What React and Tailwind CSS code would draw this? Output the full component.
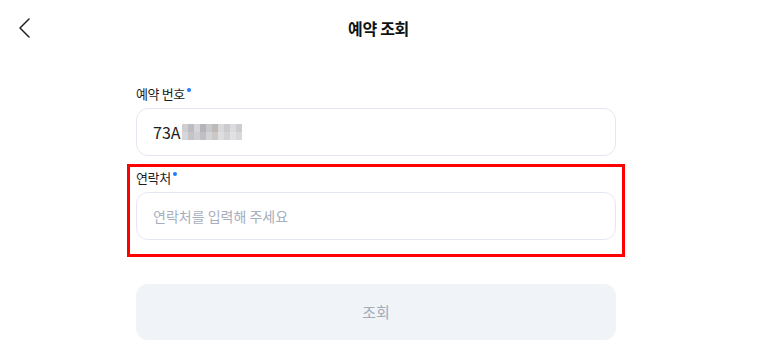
import React from "react";

const mosaic = [
  ["#cfcfd3", "#bcbcc1", "#d6d6d9", "#b4b4ba", "#c8c8cc", "#bdb9b8", "#d9d9dc", "#cbcbcf", "#dcdcdf", "#cdcdd1"],
  ["#d7d7da", "#c4c4c8", "#cfcfd2", "#bfbfc4", "#d4d4d7", "#cbc8c6", "#dedee1", "#d3d3d6", "#e1e1e3", "#d8d8db"],
];

const Label = ({ children }) => (
  <div className="flex items-start h-[20px] text-[13px] leading-[20px] text-[#1b1d22] tracking-[-0.03em]">
    <span>{children}</span>
    <span className="ml-[2px] mt-[4px] w-[4px] h-[4px] rounded-full bg-[#1f7bff]" />
  </div>
);

export default function App() {
  return (
    <div className="w-[757px] h-[353px] bg-white overflow-hidden" style={{ fontFamily: '"Noto Sans CJK KR", "Noto Sans", sans-serif' }}>
      <header className="relative h-[56px] flex items-center justify-center">
        <button className="absolute left-[18px] top-[18px] w-[12px] h-[20px] flex items-center justify-center">
          <svg width="12" height="20" viewBox="0 0 12 20" fill="none">
            <path d="M11 1 L2 10 L11 19" stroke="#222" strokeWidth="1.5" strokeLinecap="round" strokeLinejoin="round" />
          </svg>
        </button>
        <h1 className="text-[16px] font-bold text-[#111] tracking-[-0.02em]">예약 조회</h1>
      </header>

      <div className="ml-[136px] w-[480px] mt-[28px]">
        <Label>예약 번호</Label>
        <div className="mt-[4px] h-[48px] rounded-[12px] border border-[#e3e8f0] flex items-center px-[16px]">
          <span className="text-[16px] text-[#1b1d22] mr-[1px]">73A</span>
          <div className="flex flex-col">
            {mosaic.map((row, i) => (
              <div key={i} className="flex">
                {row.map((c, j) => (
                  <div key={j} className="w-[6px] h-[8px]" style={{ backgroundColor: c }} />
                ))}
              </div>
            ))}
          </div>
        </div>

        <div className="mt-[8px] -mx-[9px] border-[3px] border-[#ff0000] px-[6px] pt-[1px] pb-[14px]">
          <Label>연락처</Label>
          <div className="mt-[4px] h-[48px] rounded-[12px] border border-[#e3e8f0] flex items-center px-[16px]">
            <span className="text-[14px] text-[#a7aebd]">연락처를 입력해 주세요</span>
          </div>
        </div>

        <button className="mt-[27px] w-full h-[56px] rounded-[12px] bg-[#f0f3f8] text-[15px] text-[#a3abbb]">
          조회
        </button>
      </div>
    </div>
  );
}
